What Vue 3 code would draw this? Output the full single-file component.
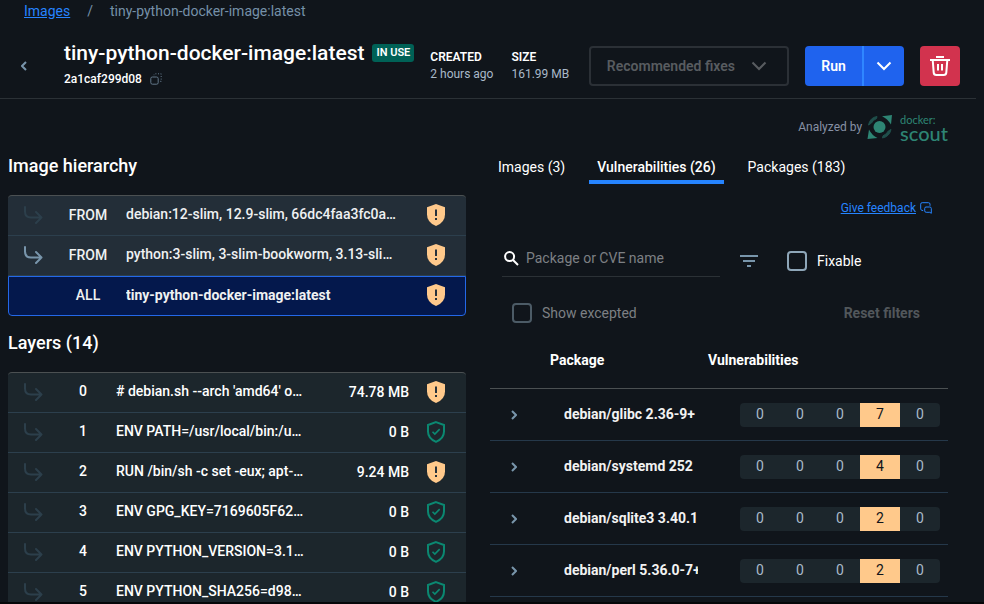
<script setup>
import { ref } from 'vue'

const search = ref('')
const fixable = ref(false)
const showExcepted = ref(false)

const hierarchy = [
  { kind: 'FROM', name: 'debian:12-slim, 12.9-slim, 66dc4faa3fc0a…', arrow: 'faint' },
  { kind: 'FROM', name: 'python:3-slim, 3-slim-bookworm, 3.13-sli…', arrow: 'bright' },
  { kind: 'ALL', name: 'tiny-python-docker-image:latest', arrow: '', selected: true }
]

const layers = [
  { command: "# debian.sh --arch 'amd64' o…", size: '74.78 MB', warn: true },
  { command: 'ENV PATH=/usr/local/bin:/u…', size: '0 B', warn: false },
  { command: 'RUN /bin/sh -c set -eux; apt-…', size: '9.24 MB', warn: true },
  { command: 'ENV GPG_KEY=7169605F62…', size: '0 B', warn: false },
  { command: 'ENV PYTHON_VERSION=3.1…', size: '0 B', warn: false },
  { command: 'ENV PYTHON_SHA256=d98…', size: '0 B', warn: false }
]

const packages = [
  { name: 'debian/glibc 2.36-9+', counts: [0, 0, 0, 7, 0] },
  { name: 'debian/systemd 252', counts: [0, 0, 0, 4, 0] },
  { name: 'debian/sqlite3 3.40.1', counts: [0, 0, 0, 2, 0] },
  { name: 'debian/perl 5.36.0-7+', counts: [0, 0, 0, 2, 0] }
]
</script>

<template>
  <div class="page">
    <nav class="crumbs" aria-label="Breadcrumb">
      <a href="#">Images</a>
      <span>/</span>
      <span>tiny-python-docker-image:latest</span>
    </nav>

    <header class="header">
      <button class="back" type="button" aria-label="Back">
        <svg width="6" height="10" viewBox="0 0 6 10"><path d="M5 1 1 5l4 4" /></svg>
      </button>
      <div class="identity">
        <div class="title-line">
          <h1>tiny-python-docker-image:latest</h1>
          <span class="badge">IN USE</span>
        </div>
        <div class="digest">
          <span>2a1caf299d08</span>
          <button class="copy" type="button" aria-label="Copy">
            <svg width="12" height="12" viewBox="0 0 12 12">
              <rect x="0.8" y="4" width="7.4" height="7.2" rx="1.6" />
              <path d="M4 2.200V1.600M5.400.8h1M8 .8h1M10.600.8h.6v.6M11.200 3v1M11.200 5.600v1M11.200 8v.3h-1" />
            </svg>
          </button>
        </div>
      </div>
      <dl class="facts">
        <div><dt>CREATED</dt><dd>2 hours ago</dd></div>
        <div><dt>SIZE</dt><dd>161.99 MB</dd></div>
      </dl>
      <div class="actions">
        <button class="fixes" type="button" disabled>
          Recommended fixes
          <svg width="16" height="10" viewBox="0 0 16 10"><path d="m1.500 1.500 6.500 6.500 6.500-6.500" /></svg>
        </button>
        <div class="split">
          <button class="run" type="button">Run</button>
          <button class="more" type="button" aria-label="Run options">
            <svg width="16" height="10" viewBox="0 0 16 10"><path d="m1.500 1.500 6.500 6.500 6.500-6.500" /></svg>
          </button>
        </div>
        <button class="delete" type="button" aria-label="Delete image">
          <svg width="20" height="20" viewBox="0 0 20 20">
            <path d="M6 1h8M0 4h20M2.700 4l1 12.600Q3.900 19 6.300 19h7.400q2.400 0 2.600-2.400L17.300 4M8 8v6.500M12 8v6.500" />
          </svg>
        </button>
      </div>
    </header>

    <main class="body">
      <div class="scout">
        <span>Analyzed by</span>
        <svg class="scout-mark" width="26" height="26" viewBox="0 0 26 26">
          <circle cx="12.500" cy="13" r="6" fill="#2e8574" />
          <path d="M25 1 24 10.500Q20.500 4.800 15 2.200ZM0.500 25 2 15.500Q5 21.500 10.500 24Z" fill="#2e8574" />
          <path d="M10 2.500Q3 3.500 1.500 11L4.500 9Q6 6 9.500 4.600ZM15.500 24Q22.500 22.500 24 15.500L21.300 17Q19.500 20.500 16 21.800Z" fill="#1f4f4b" stroke="#1f4f4b" />
        </svg>
        <div class="wordmark"><span>docker:</span><strong>scout</strong></div>
      </div>

      <div class="columns">
        <section class="left">
          <h2>Image hierarchy</h2>
          <ul class="list hierarchy">
            <li v-for="item in hierarchy" :key="item.name" :class="{ selected: item.selected }">
              <span class="arrow" :class="item.arrow">
                <svg v-if="item.arrow" width="19" height="18" viewBox="0 0 19 18"><path d="M1 1v4.500Q1 11.500 7 11.500H17.500M12 6l5.500 5.500L12 17" /></svg>
              </span>
              <span class="kind">{{ item.kind }}</span>
              <span class="name">{{ item.name }}</span>
              <svg class="shield" width="18" height="22" viewBox="0 0 18 22">
                <path d="M9 0 18 3.200V10.500Q18 18.500 9 22 0 18.500 0 10.500V3.200Z" fill="#ffc98b" />
                <path d="M9 5.500v6.500M9 13.900v2" stroke="#26323c" stroke-width="2" />
              </svg>
            </li>
          </ul>

          <h2 class="layers-title">Layers (14)</h2>
          <ul class="list layers">
            <li v-for="(layer, i) in layers" :key="layer.command">
              <span class="arrow faint">
                <svg width="19" height="18" viewBox="0 0 19 18"><path d="M1 1v4.500Q1 11.500 7 11.500H17.500M12 6l5.500 5.500L12 17" /></svg>
              </span>
              <span class="kind">{{ i }}</span>
              <span class="name">{{ layer.command }}</span>
              <span class="size">{{ layer.size }}</span>
              <svg v-if="layer.warn" class="shield" width="18" height="22" viewBox="0 0 18 22">
                <path d="M9 0 18 3.200V10.500Q18 18.500 9 22 0 18.500 0 10.500V3.200Z" fill="#ffc98b" />
                <path d="M9 5.500v6.500M9 13.900v2" stroke="#26323c" stroke-width="2" />
              </svg>
              <svg v-else class="shield" width="18" height="22" viewBox="0 0 18 22" fill="none" stroke="#0b8871">
                <path d="M9 1.100 17 4V10.500Q17 17.500 9 20.800 1 17.500 1 10.500V4Z" stroke-width="2" />
                <path d="m5.500 10.800 2.300 2.300 4.900-5" stroke-width="1.600" />
              </svg>
            </li>
          </ul>
        </section>

        <section class="right">
          <div class="tabs" role="tablist">
            <button type="button" role="tab">Images (3)</button>
            <button type="button" role="tab" class="active" aria-selected="true">Vulnerabilities (26)</button>
            <button type="button" role="tab">Packages (183)</button>
          </div>

          <div class="feedback">
            <a href="#">Give feedback</a>
            <svg width="12" height="12" viewBox="0 0 12 12">
              <path d="M3.200 8.600 1.800 8.300Q.7 8 .7 6.800V2.200Q.7.7 2.200.7H8.500Q10 .7 10 2.200V3.800" />
              <path d="M6 5H9.800Q11.300 5 11.300 6.500V11.300L9.800 10.300H6.200Q4.700 10.300 4.700 8.800V6.500Q4.700 5 6 5Z" />
            </svg>
          </div>

          <div class="filters">
            <label class="search">
              <svg width="15" height="15" viewBox="0 0 15 15"><circle cx="5.600" cy="5.600" r="4.500" /><path d="m9 9 5 5" /></svg>
              <input v-model="search" type="text" placeholder="Package or CVE name" aria-label="Package or CVE name" />
            </label>
            <button class="filter" type="button" aria-label="Filter">
              <svg width="18" height="12" viewBox="0 0 18 12"><path d="M0 1h18M3 6h12M7 11h4" /></svg>
            </button>
            <label class="check"><input v-model="fixable" type="checkbox" />Fixable</label>
          </div>

          <div class="excepted">
            <label class="check muted"><input v-model="showExcepted" type="checkbox" />Show excepted</label>
            <button class="reset" type="button" disabled>Reset filters</button>
          </div>

          <table>
            <colgroup><col class="c-toggle" /><col /><col class="c-vulns" /></colgroup>
            <thead>
              <tr><th></th><th>Package</th><th>Vulnerabilities</th></tr>
            </thead>
            <tbody>
              <tr v-for="pkg in packages" :key="pkg.name">
                <td class="toggle">
                  <button type="button" :aria-label="'Expand ' + pkg.name">
                    <svg width="6" height="10" viewBox="0 0 6 10"><path d="m1 1 4 4-4 4" /></svg>
                  </button>
                </td>
                <td class="pkg"><div>{{ pkg.name }}</div></td>
                <td>
                  <div class="counts">
                    <span v-for="(n, i) in pkg.counts" :key="i" :class="{ hot: n > 0 }">{{ n }}</span>
                  </div>
                </td>
              </tr>
            </tbody>
          </table>
        </section>
      </div>
    </main>
  </div>
</template>

<style>
body {
  margin: 0;
  background: #10151b;
}
</style>

<style scoped>
* {
  box-sizing: border-box;
}
.page {
  height: 100vh;
  overflow: hidden;
  display: flex;
  flex-direction: column;
  border-bottom: 2px solid #050709;
  background: #10151b;
  color: #fff;
  font: 400 14px/20px Roboto, sans-serif;
}
button {
  padding: 0;
  border: 0;
  background: none;
  color: inherit;
  font: inherit;
}
svg {
  display: block;
  flex: none;
}
button svg,
.arrow svg,
.search svg,
.feedback svg {
  fill: none;
  stroke: currentColor;
}
a {
  color: #2684ff;
}
h1,
h2,
dl,
dd,
ul {
  margin: 0;
  padding: 0;
}
.crumbs {
  display: flex;
  flex: none;
  gap: 17px;
  padding: 1px 24px 0;
  color: #7590a8;
}
.header {
  flex: none;
  display: flex;
  align-items: center;
  height: 78px;
  margin-right: 8px;
  padding: 12px 16px 0 21px;
  border-bottom: 1px solid #2b3136;
}
.back {
  color: #7794ab;
  margin-right: 37px;
}
.back svg,
.toggle svg {
  stroke-width: 2;
}
.title-line {
  display: flex;
  align-items: center;
  gap: 8px;
}
h1 {
  font-size: 21px;
  font-weight: 500;
  line-height: 28px;
  white-space: nowrap;
}
.badge {
  padding: 0 4px;
  border-radius: 3px;
  background: #006156;
  font-size: 11px;
  font-weight: 600;
  line-height: 18px;
  white-space: nowrap;
}
.digest {
  display: flex;
  align-items: center;
  gap: 8px;
  margin-bottom: 2px;
  font-size: 12px;
  font-weight: 500;
  line-height: 24px;
}
.copy {
  color: #63788a;
}
.facts {
  display: flex;
  gap: 18px;
  margin-left: 16px;
  font-size: 12px;
  line-height: 17px;
  white-space: nowrap;
}
.facts dt {
  font-weight: 600;
}
.facts dd {
  color: #a9b9c9;
}
.actions {
  display: flex;
  gap: 16px;
  margin-left: auto;
  font-weight: 600;
}
.actions button {
  height: 40px;
  display: flex;
  align-items: center;
  justify-content: center;
}
.actions svg {
  stroke-width: 2;
}
.fixes {
  gap: 16px;
  padding: 0 20px 0 16px;
  border: 2px solid #2b3036;
  border-radius: 4px;
  color: #585c60;
  white-space: nowrap;
}
.split {
  display: flex;
  border-radius: 4px;
  overflow: hidden;
  background: #1f63ee;
}
.run {
  width: 57px;
}
.actions .more {
  width: 42px;
  border-left: 2px solid #2f86ff;
}
.delete {
  width: 40px;
  border-radius: 4px;
  background: #d2334e;
}
.body {
  flex: 1;
  min-height: 0;
  padding: 15px 36px 0 8px;
  overflow: hidden;
}
.scout {
  display: flex;
  align-items: center;
  justify-content: flex-end;
  height: 26px;
  margin-bottom: 9px;
  color: #8791a5;
  font-size: 12px;
}
.scout-mark {
  margin: 0 7px 0 5px;
}
.wordmark {
  display: flex;
  flex-direction: column;
  color: #2e8574;
  font-family: Lato, sans-serif;
}
.wordmark span {
  font-size: 11px;
  line-height: 12px;
}
.wordmark strong {
  font-size: 20px;
  font-weight: 500;
  line-height: 14px;
}
.columns {
  display: grid;
  grid-template-columns: minmax(0, 1fr) minmax(0, 1fr);
  gap: 24px;
}
h2 {
  margin-bottom: 12px;
  font-size: 18px;
  font-weight: 500;
  line-height: 34px;
}
.layers-title {
  margin-top: 10px;
}
.list {
  list-style: none;
  overflow: hidden;
  border-top: 1px solid #4b5052;
  border-radius: 4px;
  background: #1c262c;
}
.hierarchy {
  background: #232e38;
}
.list li {
  display: grid;
  grid-template-columns: 26px 40px minmax(0, 1fr) 18px;
  gap: 18px;
  align-items: center;
  height: 40px;
  padding: 0 21px 2px 16px;
  border-bottom: 1px solid #2c3f4d;
  font-weight: 500;
}
.list.layers li {
  grid-template-columns: 26px 30px minmax(0, 1fr) 64px 18px;
}
.list li.selected {
  padding: 0 20px 2px 15px;
  border: 1px solid #2468e8;
  border-radius: 0 0 4px 4px;
  background: #04184c;
}
.arrow {
  color: #2c3f4b;
}
.arrow.bright {
  color: #7895ab;
}
.arrow svg {
  stroke-width: 2;
  stroke-linecap: round;
  stroke-linejoin: round;
}
.kind {
  text-align: center;
}
.hierarchy {
  color: #eff1f2;
}
.name {
  overflow: hidden;
  white-space: nowrap;
  text-overflow: ellipsis;
  padding-bottom: 1px;
}
.layers .kind {
  padding-bottom: 1px;
}
.hierarchy .selected .name {
  font-weight: 700;
}
.size {
  text-align: right;
  white-space: nowrap;
}
.tabs {
  display: flex;
  gap: 16px;
}
.tabs button {
  height: 35px;
  padding: 5px 8px 0;
  border-bottom: 4px solid transparent;
  line-height: 26px;
  white-space: nowrap;
}
.tabs .active {
  border-color: #2684ff;
  font-weight: 500;
}
.feedback {
  display: flex;
  align-items: center;
  justify-content: flex-end;
  gap: 4px;
  margin: 16px 16px 24px 0;
  color: #2684ff;
  font-size: 12px;
  line-height: 16px;
}
.filters {
  display: flex;
  align-items: center;
  height: 41px;
  margin-left: 12px;
}
.search {
  display: flex;
  align-items: center;
  align-self: flex-start;
  gap: 7px;
  flex: 0 1 218px;
  height: 37px;
  padding-left: 2px;
  border-bottom: 1px solid #2b3136;
}
.search svg {
  stroke-width: 2;
}
.search input {
  flex: 1;
  min-width: 0;
  padding: 0;
  border: 0;
  outline: 0;
  background: none;
  color: #fff;
  font: inherit;
}
.search input::placeholder {
  color: #7d8084;
  opacity: 1;
}
.filter {
  margin: 0 29px 0 20px;
  color: #7895ab;
}
.filter svg {
  stroke-width: 2;
}
.check {
  display: flex;
  align-items: center;
  gap: 10px;
}
.check input {
  appearance: none;
  width: 20px;
  height: 20px;
  margin: 0;
  border: 2px solid #8ea6b8;
  border-radius: 4px;
}
.check input:checked {
  background: #2684ff;
}
.muted {
  color: #7d8084;
}
.muted input {
  border-color: #4c5b66;
}
.excepted {
  display: flex;
  align-items: center;
  justify-content: space-between;
  height: 40px;
  margin-top: 12px;
  padding: 0 28px 0 22px;
}
.reset {
  color: #52575b;
  font-weight: 700;
}
table {
  width: 100%;
  table-layout: fixed;
  border-collapse: separate;
  border-spacing: 0;
}
.c-toggle {
  width: 60px;
}
.c-vulns {
  width: 240px;
}
th,
td {
  padding: 0;
  text-align: left;
}
th {
  height: 56px;
  padding-bottom: 2px;
  border-bottom: 1px solid #4b5052;
  font-weight: 700;
}
td {
  height: 52px;
  border-bottom: 1px solid #25384a;
}
.toggle button {
  display: block;
  margin-left: 21px;
  color: #7895ab;
}
.pkg {
  padding: 0 10px 2px 14px;
  color: #f2f2f2;
  font-weight: 700;
}
.pkg div {
  overflow: hidden;
  white-space: nowrap;
}
.counts {
  display: flex;
  width: 200px;
  margin: 0 8px 0 auto;
  border-radius: 4px;
  overflow: hidden;
  background: #1c262c;
  color: #a9b9c9;
  line-height: 22px;
}
.counts span {
  flex: 1;
  padding-bottom: 2px;
  text-align: center;
}
.counts .hot {
  background: #ffc98b;
  color: #10151b;
}
</style>
